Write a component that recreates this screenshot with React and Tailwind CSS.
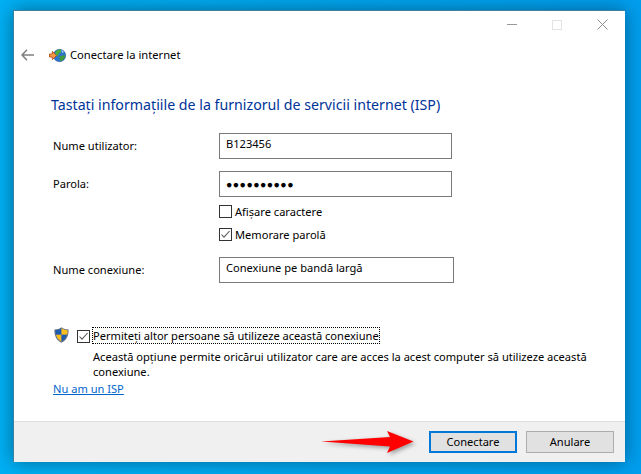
import React from "react";

const font = "font-['Noto_Sans','Open_Sans',sans-serif]";

function TextBox({ children, width = "w-[233px]" }) {
  return (
    <div className={`${width} h-[26px] border border-[#7a7a7a] bg-white pl-[6px] flex items-start pt-[1px] text-[11.1px] leading-[18px] text-black`}>
      {children}
    </div>
  );
}

function Check({ checked }) {
  return (
    <div className="w-[13px] h-[13px] shrink-0 border border-[#333333] bg-white flex items-center justify-center">
      {checked && (
        <svg width="11" height="11" viewBox="0 0 11 11" fill="none">
          <path d="M1.5 5.5 L4 8.2 L9.6 2" stroke="#5a5a5a" strokeWidth="1.1" />
        </svg>
      )}
    </div>
  );
}

function Row({ label, children, className = "" }) {
  return (
    <div className={`flex items-start ${className}`}>
      <div className="w-[166px] pt-[4px] text-[11.1px] leading-[18px] text-black">{label}</div>
      {children}
    </div>
  );
}

function GlobeIcon() {
  return (
    <svg width="17" height="17" viewBox="0 0 17 17" className="shrink-0">
      <circle cx="10.5" cy="8.5" r="6.2" fill="#2c74cc" stroke="#1c4f8f" strokeWidth="0.5" />
      <path d="M6.5 4.5 C8 2.8 10.5 2.2 12 2.6 L12 5.5 L9.5 6.5 L9 9.5 L6.5 8 Z" fill="#4cae3c" />
      <path d="M10.5 9.5 L15.5 8 L16 10.5 L12.5 14.3 L10.8 13 Z" fill="#3f9e36" />
      <path d="M12.3 2.8 L15 5 L13.3 6 Z" fill="#a6d6f7" />
      <path d="M0.5 7 H3.3 V4.4 L7.6 8.5 L3.3 12.6 V10 H0.5 Z" fill="#f79a4a" stroke="#b8501a" strokeWidth="0.9" strokeLinejoin="round" />
    </svg>
  );
}

function ShieldIcon() {
  return (
    <svg width="15" height="16" viewBox="0 0 15 16" className="shrink-0">
      <path d="M7.5 0.2 C9.5 1.8 12 2.4 14.6 2.4 C14.8 8.5 12.7 13.2 7.5 15.8 C2.3 13.2 0.2 8.5 0.4 2.4 C3 2.4 5.5 1.8 7.5 0.2 Z" fill="#6c7684" />
      <path d="M7.5 1.3 C5.7 2.6 3.5 3.2 1.4 3.3 C1.4 5 1.6 6.4 2 7.7 H7.5 Z" fill="#1d5cb0" />
      <path d="M7.5 1.3 C9.3 2.6 11.5 3.2 13.6 3.3 C13.6 5 13.4 6.4 13 7.7 H7.5 Z" fill="#f9bf1f" />
      <path d="M2 7.7 H7.5 V14.6 C4.7 13 2.8 10.7 2 7.7 Z" fill="#f9bf1f" />
      <path d="M13 7.7 H7.5 V14.6 C10.3 13 12.2 10.7 13 7.7 Z" fill="#1d5cb0" />
    </svg>
  );
}

function RedArrow() {
  return (
    <svg width="96" height="28" viewBox="0 0 96 28" className="shrink-0 drop-shadow-[2px_2px_2px_rgba(0,0,0,0.35)]">
      <path d="M1 13.5 L70 9 L67 3 L93.5 13.5 L67 25 L70 18.5 Z" fill="#ff0000" />
    </svg>
  );
}

export default function App() {
  return (
    <div className={`w-[641px] h-[474px] pt-[10px] pl-[13px] pr-[16px] pb-[12px] bg-gradient-to-r from-[#00b0f4] to-[#009eee] ${font}`}>
      <div className="w-full h-full flex flex-col bg-white border-t border-l border-[#3f7f9f] shadow-[0_0_18px_rgba(0,0,0,0.4)]">
        {/* title bar */}
        <div className="h-[27px] flex justify-end items-center shrink-0 pr-[17px] gap-[35px]">
          <svg width="10" height="10" viewBox="0 0 10 10"><path d="M0 4.5 H10" stroke="#9a9a9a" /></svg>
          <svg width="10" height="10" viewBox="0 0 10 10"><rect x="0.5" y="0.5" width="9" height="9" fill="none" stroke="#e3e3e3" /></svg>
          <svg width="11" height="11" viewBox="0 0 11 11"><path d="M0.5 0.5 L10.5 10.5 M10.5 0.5 L0.5 10.5" stroke="#8c8c8c" /></svg>
        </div>
        {/* nav */}
        <div className="mt-[7px] h-[20px] flex items-center pl-[7px] shrink-0">
          <svg width="13" height="12" viewBox="0 0 13 12" className="shrink-0">
            <path d="M6 0.8 L1 6 L6 11.2 M1 6 H13" fill="none" stroke="#808080" strokeWidth="1.6" />
          </svg>
          <div className="ml-[15px]"><GlobeIcon /></div>
          <span className="ml-[4px] text-[11.2px] leading-[18px] text-black">Conectare la internet</span>
        </div>
        {/* content */}
        <div className="flex-1 pl-[39px] pr-[20px]">
          <h1 className="-ml-[2px] mt-[29px] text-[14.2px] leading-[22px] font-normal text-[#003399] whitespace-nowrap">
            Tastați informațiile de la furnizorul de servicii internet (ISP)
          </h1>
          <Row label="Nume utilizator:" className="mt-[17px]">
            <TextBox>B123456</TextBox>
          </Row>
          <Row label="Parola:" className="mt-[12px]">
            <TextBox>
              <span className="text-[10.5px] tracking-[0.45px] leading-[22px]">●●●●●●●●●●</span>
            </TextBox>
          </Row>
          <div className="ml-[166px] mt-[8px] flex items-center gap-[3px] h-[13px] text-[11.1px] text-black">
            <Check />
            <span className="pt-[1px]">Afișare caractere</span>
          </div>
          <div className="ml-[166px] mt-[10px] flex items-center gap-[3px] h-[13px] text-[11.1px] text-black">
            <Check checked />
            <span className="pt-[1px]">Memorare parolă</span>
          </div>
          <Row label="Nume conexiune:" className="mt-[16px]">
            <TextBox width="w-[235px]">Conexiune pe bandă largă</TextBox>
          </Row>
          <div className="mt-[45px] flex items-start">
            <div className="ml-[1px] -mt-[1px]"><ShieldIcon /></div>
            <div className="ml-[8px] mt-[2px]"><Check checked /></div>
            <div className="ml-[2px] text-[11.1px] leading-[15px] text-black">
              <div className="-mt-[1px] border border-dotted border-black w-[288px] h-[17px] whitespace-nowrap leading-[16px]">
                Permiteți altor persoane să utilizeze această conexiune
              </div>
              <p className="mt-[5px] ml-[1px] w-[505px]">
                Această opțiune permite oricărui utilizator care are acces la acest computer să utilizeze această conexiune.
              </p>
            </div>
          </div>
          <a className="block mt-[2px] text-[11.1px] leading-[16px] text-[#0066cc] underline">Nu am un ISP</a>
        </div>
        {/* footer */}
        <div className="h-[41px] shrink-0 bg-[#f0f0f0] border-t border-[#dfdfdf] flex items-center justify-end pr-[11px]">
          <RedArrow />
          <button className="ml-[13px] w-[88px] h-[22px] bg-[#e1e1e1] border-2 border-[#0078d7] text-[11.1px] text-black">Conectare</button>
          <button className="ml-[9px] w-[88px] h-[22px] bg-[#e1e1e1] border border-[#adadad] text-[11.1px] text-black">Anulare</button>
        </div>
      </div>
    </div>
  );
}
